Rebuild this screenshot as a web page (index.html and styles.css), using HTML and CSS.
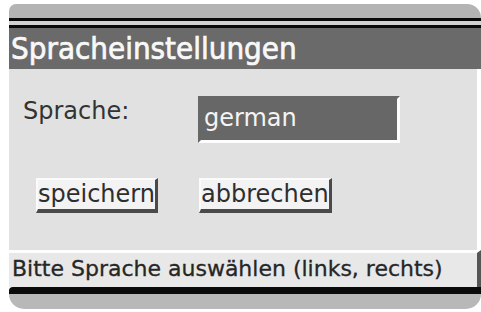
FILE: index.html
```html
<!DOCTYPE html>
<html lang="de">
<head>
<meta charset="utf-8">
<title>Spracheinstellungen</title>
<link rel="stylesheet" href="styles.css">
</head>
<body>
<div class="frame">
  <div class="top-strip"></div>
  <div class="rule"></div>
  <div class="rule-light"></div>
  <div class="rule"></div>
  <div class="title">Spracheinstellungen</div>
  <div class="content">
    <div class="row">
      <span class="label">Sprache:</span>
      <span class="field">german</span>
    </div>
    <div class="buttons">
      <span class="btn">speichern</span>
      <span class="btn">abbrechen</span>
    </div>
  </div>
  <div class="status">Bitte Sprache auswählen (links, rechts)</div>
  <div class="rule rule-bottom"></div>
  <div class="bottom-strip"></div>
</div>
</body>
</html>
```

FILE: styles.css
```css
html, body {
  margin: 0;
  padding: 0;
  background: #ffffff;
}
body {
  font-family: "DejaVu Sans", "Liberation Sans", sans-serif;
}
.frame {
  margin: 4px 0 0 9px;
  width: 472px;
  display: flex;
  flex-direction: column;
}
.top-strip {
  height: 14px;
  background: #b4b4b4;
  border-radius: 10px 20px 0 0;
}
.rule {
  height: 3px;
  background: #0a0a0a;
}
.rule-light {
  height: 4px;
  background: #d2d2d2;
}
.title {
  height: 41px;
  background: #6a6a6a;
  color: #f8f8f8;
  font-family: "DejaVu Sans Condensed", "DejaVu Sans", sans-serif;
  font-size: 31px;
  line-height: 40px;
  padding-left: 2px;
  -webkit-text-stroke: 0.7px #f8f8f8;
}
.content {
  height: 181px;
  background: #e1e1e1;
  margin-right: 4px;
  padding: 27px 0 0 14px;
  box-sizing: border-box;
  display: flex;
  flex-direction: column;
  gap: 35px;
}
.row {
  display: flex;
  align-items: flex-start;
}
.label {
  width: 175px;
  font-size: 24px;
  color: #333;
  line-height: 30px;
}
.field {
  width: 193px;
  height: 41px;
  background: #676767;
  border: 3px solid;
  border-color: #676767 #fdfdfd #fdfdfd #676767;
  color: #f4f4f4;
  font-size: 24px;
  line-height: 38px;
  padding-left: 3px;
  box-sizing: content-box;
}
.buttons {
  display: flex;
  gap: 41px;
  margin-left: 13px;
}
.btn {
  display: block;
  background: #f3f3f3;
  border: 2px solid;
  border-width: 2px 3px 4px 2px;
  border-color: #fbfbfb #4a4a4a #4a4a4a #fbfbfb;
  color: #2e2e2e;
  font-size: 24px;
  line-height: 29px;
}
.status {
  border-top: 3px solid #fdfdfd;
  height: 34px;
  background: #e8e8e8;
  border-right: 4px solid #555;
  color: #262626;
  font-size: 22px;
  line-height: 32px;
  padding-left: 3px;
  -webkit-text-stroke: 0.3px #262626;
}
.rule-bottom {
  height: 7px;
  border-radius: 4px 0 0 0;
}
.bottom-strip {
  height: 15px;
  background: #b8b8b8;
  border-radius: 0 0 16px 16px;
}
```
